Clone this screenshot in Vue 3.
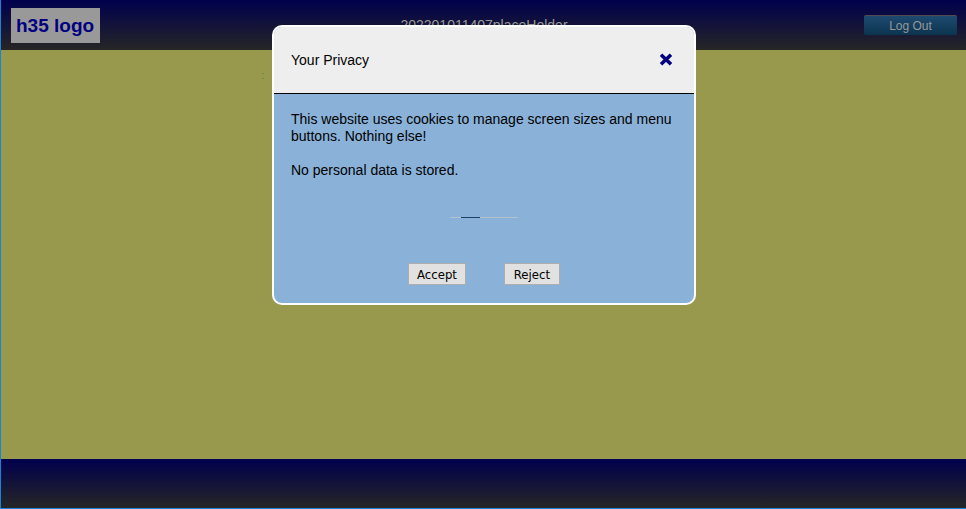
<script setup>
import { ref } from 'vue'

const open = ref(true)
const close = () => { open.value = false }
</script>

<template>
  <div class="page">
    <header class="bar top">
      <a class="logo" href="#">h35 logo</a>
      <span class="title">202201011407placeHolder</span>
      <button class="logout" type="button">Log Out</button>
    </header>
    <main class="content">:</main>
    <footer class="bar"></footer>

    <div v-if="open" class="overlay">
      <section class="dialog" role="dialog" aria-labelledby="privacy-title">
        <div class="dialog-head">
          <h1 id="privacy-title">Your Privacy</h1>
          <button class="close" type="button" aria-label="Close" @click="close">
            <svg width="14" height="14" viewBox="0 0 14 14" aria-hidden="true">
              <path d="M2 1.8 L12 11.2 M12 1.8 L2 11.2" stroke="#000080" stroke-width="3.6" fill="none" />
            </svg>
          </button>
        </div>
        <div class="dialog-body">
          <p>This website uses cookies to manage screen sizes and menu buttons. Nothing else!</p>
          <p>No personal data is stored.</p>
          <div class="track"><span class="thumb"></span></div>
          <div class="actions">
            <button type="button" @click="close">Accept</button>
            <button type="button" @click="close">Reject</button>
          </div>
        </div>
      </section>
    </div>
  </div>
</template>

<style>
body {
  margin: 0;
}
</style>

<style scoped>
.page {
  box-sizing: border-box;
  min-height: 100vh;
  display: flex;
  flex-direction: column;
  border-left: 1px solid #1883d7;
  border-bottom: 1px solid #1883d7;
  background: #99994d;
  font-family: "Liberation Sans", Arial, sans-serif;
  font-size: 14px;
}
.bar {
  box-sizing: border-box;
  height: 49px;
  background: linear-gradient(#00004d, #262626);
}
.top {
  height: 50px;
  display: grid;
  grid-template-columns: 1fr auto 1fr;
  align-items: center;
  padding: 0 9px 0 10px;
}
.logo {
  justify-self: start;
  padding: 0 6px 0 5px;
  background: #999;
  color: #000080;
  font-size: 19px;
  font-weight: bold;
  line-height: 35px;
  text-decoration: none;
}
.title {
  color: #999;
}
.logout {
  justify-self: end;
  width: 93px;
  height: 20px;
  padding: 0;
  border: 0;
  border-top: 1px solid #544a55;
  border-radius: 2px;
  background: linear-gradient(#1f4a70, #0a344e);
  color: #999;
  font: 12px "Liberation Sans", Arial, sans-serif;
}
.content {
  flex: 1;
  padding: 20px 27%;
  color: #4d804d;
  font-size: 10px;
  line-height: 12px;
}
.overlay {
  position: absolute;
  inset: 0;
  padding: 25px 0 0 2px;
}
.dialog {
  box-sizing: border-box;
  max-width: 424px;
  margin: 0 auto;
  overflow: hidden;
  border: 2px solid #fff;
  border-radius: 10px;
  background: #8ab2d9;
  color: #000;
}
.dialog-head {
  display: flex;
  align-items: center;
  justify-content: space-between;
  height: 66px;
  padding: 0 17px;
  border-bottom: 1px solid #000;
  background: #eee;
}
h1 {
  margin: 0;
  font-size: 14px;
  font-weight: normal;
}
.close {
  display: flex;
  padding: 4px;
  border: 0;
  background: none;
}
.dialog-body {
  padding: 17px 17px 18px;
  line-height: 17px;
}
p {
  margin: 0 0 17px;
}
.track {
  display: flex;
  width: 68px;
  height: 1px;
  margin: 38px auto 45px;
  background: #b0c2cc;
}
.thumb {
  width: 19px;
  margin-left: 11px;
  background: #1c3f66;
}
.actions {
  display: flex;
  justify-content: center;
  gap: 38px;
}
.actions button {
  min-width: 56px;
  height: 22px;
  padding: 0 8px;
  border: 1px solid #adadad;
  background: #e1e1e1;
  color: #000;
  font: 13px "DejaVu Sans Condensed", Tahoma, "Noto Sans", sans-serif;
}
</style>
